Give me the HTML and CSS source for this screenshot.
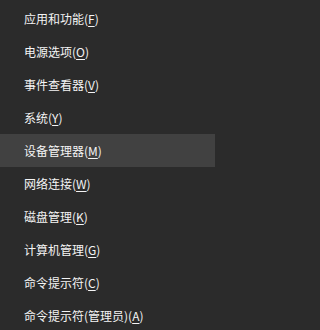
FILE: index.html
```html
<!DOCTYPE html>
<html lang="zh-CN">
<head>
<meta charset="utf-8">
<link rel="stylesheet" href="styles.css">
</head>
<body>
<ul class="menu">
  <li class="item">应用和功能(<u>F</u>)</li>
  <li class="item">电源选项(<u>O</u>)</li>
  <li class="item">事件查看器(<u>V</u>)</li>
  <li class="item">系统(<u>Y</u>)</li>
  <li class="item active">设备管理器(<u>M</u>)</li>
  <li class="item">网络连接(<u>W</u>)</li>
  <li class="item">磁盘管理(<u>K</u>)</li>
  <li class="item">计算机管理(<u>G</u>)</li>
  <li class="item">命令提示符(<u>C</u>)</li>
  <li class="item">命令提示符(管理员)(<u>A</u>)</li>
</ul>
</body>
</html>
```
FILE: styles.css
```css
html, body {
  margin: 0;
  padding: 0;
  background: #2b2b2b;
}
body {
  width: 215px;
  height: 330px;
  overflow: hidden;
  font-family: "Noto Sans CJK SC", "Noto Sans", sans-serif;
  font-size: 12px;
  color: #f4f4f4;
}
.menu {
  list-style: none;
  margin: 0;
  padding: 2px 0 0 0;
  display: flex;
  flex-direction: column;
}
.item {
  height: 33px;
  display: flex;
  align-items: center;
  padding-left: 24px;
  white-space: nowrap;
}
.item u {
  text-decoration-thickness: 1px;
  text-underline-offset: 2px;
}
.active {
  background: #414141;
}
```
